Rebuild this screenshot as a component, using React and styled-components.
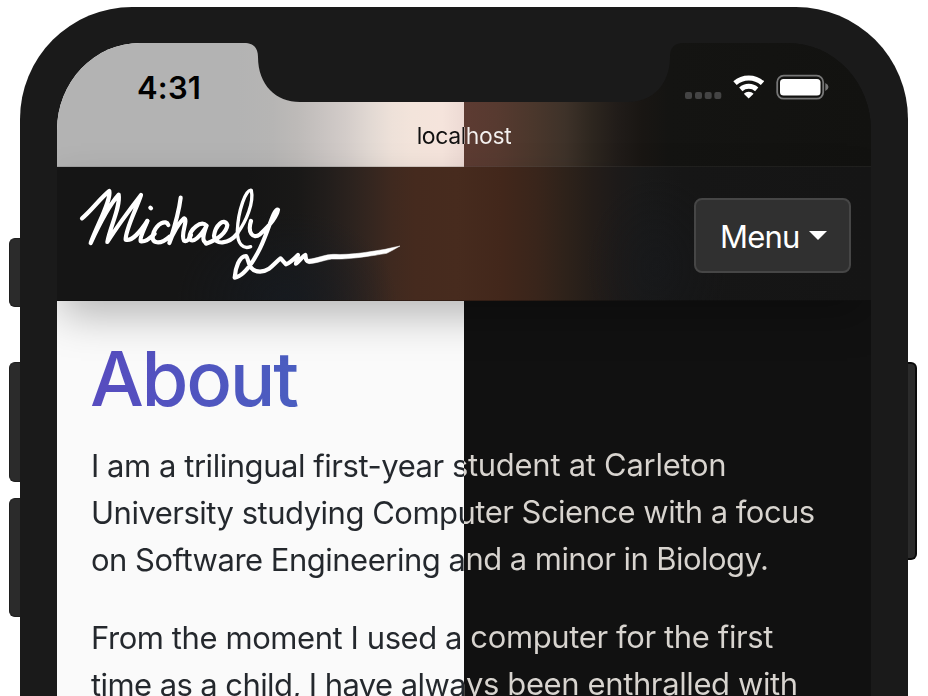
import React from 'react';
import styled, { createGlobalStyle } from 'styled-components';

const Global = createGlobalStyle`
  * { box-sizing: border-box; }
  body { margin: 0; background: #fff; overflow: hidden; font-family: Inter, "Liberation Sans", sans-serif; }
`;

const Stage = styled.div`
  display: grid;
  grid-template-columns: 20px 888px 20px;
  width: 928px;
  height: 696px;
  overflow: hidden;
`;

const ButtonRail = styled.div`
  display: flex;
  flex-direction: column;
  align-items: ${p => (p.$side === 'left' ? 'flex-end' : 'flex-start')};
  padding-top: ${p => p.$top}px;
`;

const SideButton = styled.div`
  flex: none;
  width: ${p => (p.$side === 'left' ? 11 : 9)}px;
  height: ${p => p.$height}px;
  margin-bottom: ${p => p.$gap || 0}px;
  background: #2b2b2b;
  border: ${p => (p.$side === 'left' ? '1px solid #1f1f1f' : '2px solid #0b0b0b')};
  border-${p => (p.$side === 'left' ? 'right' : 'left')}: 0;
  border-radius: ${p => (p.$side === 'left' ? '6px 0 0 6px' : '0 6px 6px 0')};
`;

const Bezel = styled.div`
  height: 800px;
  margin-top: 7px;
  padding: 36px 37px 0;
  background: #1a1a1a;
  border-radius: 112px 112px 0 0;
`;

const Screen = styled.div`
  position: relative;
  width: 814px;
  height: 764px;
  overflow: hidden;
  border-radius: 83px 83px 0 0 / 87px 87px 0 0;
  background: linear-gradient(90deg, #fafafa 407px, #111 407px);
`;

const Notch = styled.svg`
  position: absolute;
  top: 0;
  left: 187px;
  width: 440px;
  height: 60px;
`;

const SafariTop = styled.div`
  display: flex;
  flex-direction: column;
  height: 124px;
  background: linear-gradient(90deg,
    #b3b3b3 0, #b3b3b3 180px, #b6b5b4 215px, #bdbab8 240px, #c7c2c0 263px, #d3ccc9 289px,
    #e2d9d3 314px, #eee1d9 335px, #f3e4db 355px, #f5e4dc 385px, #eddad4 407px,
    #5d3b32 407px, #573a30 440px, #4b372c 475px, #3e3229 508px, #2d261f 535px,
    #211c19 560px, #191613 585px, #141412 612px, #121210 100%);
  border-bottom: 1px solid rgba(90, 90, 90, .2);
`;

const StatusBar = styled.div`
  display: flex;
  justify-content: space-between;
  align-items: center;
  height: 59px;
  padding: 29px 42px 0 80px;
`;

const Clock = styled.span`
  font-size: 31px;
  line-height: 31px;
  font-weight: 600;
  letter-spacing: .2px;
  color: #000;
`;

const StatusIcons = styled.svg`
  width: 146px;
  height: 28px;
`;

const Address = styled.div`
  display: flex;
  justify-content: center;
  padding-top: 20px;
  font-size: 23px;
  line-height: 28px;
`;

const AddressText = styled.span`
  letter-spacing: -.4px;
  color: transparent;
  background: linear-gradient(90deg, #111 47px, #f4f1ef 47px);
  background-clip: text;
  -webkit-background-clip: text;
`;

const Navbar = styled.nav`
  position: relative;
  display: flex;
  justify-content: space-between;
  align-items: flex-start;
  height: 134px;
  padding: 19px 20px 0 21px;
  border-bottom: 1px solid rgba(0, 0, 0, .25);
  background:
    radial-gradient(ellipse 110px 90px at 230px 134px, rgba(22, 27, 34, .75), rgba(22, 27, 34, 0)),
    radial-gradient(ellipse 70px 90px at 600px 100px, rgba(22, 25, 30, .4), rgba(22, 25, 30, 0)),
    linear-gradient(90deg,
      #151515 0, #151515 190px, #191817 240px, #211d1b 268px, #2b221e 293px, #35261f 315px,
      #3f291f 335px, #452a1e 358px, #472b1e 400px, #42271b 445px, #39251b 480px, #2e221a 508px,
      #241d19 535px, #1d1a19 560px, #191919 585px, #161616 625px, #151515 100%);
  box-shadow: 0 18px 40px -4px rgba(0, 0, 0, .28);
`;

const Signature = styled.svg`
  width: 325px;
  height: 95px;
`;

const MenuButton = styled.button`
  display: flex;
  align-items: center;
  gap: 9px;
  width: 157px;
  height: 75px;
  margin-top: 12px;
  padding: 3px 0 0 24px;
  border: 2px solid #464646;
  border-radius: 8px;
  background: #303030;
  color: #fff;
  font: 400 31px/36px Inter, sans-serif;
  letter-spacing: -.8px;
`;

const Caret = styled.span`
  margin-bottom: 3px;
  border: 9px solid transparent;
  border-top-color: #fff;
  border-bottom: 0;
`;

const Article = styled.main`
  padding: 32px 0 0 34px;
`;

const Heading = styled.h1`
  width: 640px;
  margin: 0 0 18px;
  font-size: 76px;
  line-height: 91px;
  font-weight: 500;
  letter-spacing: -2.3px;
  text-indent: -1px;
  color: transparent;
  background: linear-gradient(90deg, #574cbf 0, #4a5ec0 210px, #3b72c2 100%);
  background-clip: text;
  -webkit-background-clip: text;
`;

const Paragraph = styled.p`
  margin: 0 0 31px;
  font-size: 31px;
  line-height: 47px;
  white-space: nowrap;
  color: transparent;
  background: linear-gradient(90deg, #24282d 373px, #d8d4cf 373px);
  background-clip: text;
  -webkit-background-clip: text;
`;

const Line = styled.span`
  display: block;
`;

const Run = styled.span`
  letter-spacing: ${p => p.$tracking}px;
  line-height: 0;
  vertical-align: ${p => (p.$raised ? '1px' : 'baseline')};
`;

const paragraphs = [
  [
    [['I am a trilingual first-year s', -.46], ['tudent at Carleton', -.28]],
    [['University studying Compu', -.5], ['ter Science with a focus', -.53]],
    [['on Software Engineering a', -.5], ['nd a minor in Biology.', -.55]],
  ],
  [
    [['From the moment I used a', -.43], [' computer for the first', -.38]],
    [['time as a child, I have alwa', -.59], ['ys been enthralled with', -.39]],
  ],
];

export default function App() {
  return (
    <>
      <Global />
      <Stage>
        <ButtonRail $side="left" $top={238}>
          <SideButton $side="left" $height={69} $gap={55} />
          <SideButton $side="left" $height={120} $gap={16} />
          <SideButton $side="left" $height={119} />
        </ButtonRail>
        <Bezel>
          <Screen>
            <SafariTop>
              <StatusBar>
                <Clock>4:31</Clock>
                <StatusIcons viewBox="0 0 146 28">
                  <g fill="#444">
                    <rect x="2" y="19" width="7" height="7" rx="2" />
                    <rect x="12" y="19" width="7" height="7" rx="2" />
                    <rect x="21.7" y="19" width="7" height="7" rx="2" />
                    <rect x="31.3" y="19" width="7" height="7" rx="2" />
                  </g>
                  <g fill="none" stroke="#fff" strokeWidth="5">
                    <path d="M52 10.2 A20.5 20.5 0 0 1 79.5 10.2" />
                    <path d="M57.8 16.3 A12.2 12.2 0 0 1 73.7 16.3" />
                  </g>
                  <path d="M65.7 25.6 L60.8 20.8 A7 7 0 0 1 70.6 20.8 Z" fill="#fff" />
                  <rect x="94.2" y="2.7" width="46" height="23" rx="6.5" fill="none" stroke="#777" strokeWidth="1.8" />
                  <rect x="97" y="6" width="40.5" height="16.5" rx="3.5" fill="#fff" />
                  <path d="M142.3 10 Q145.5 11.5 145.5 14 Q145.5 16.5 142.3 18 Z" fill="#777" />
                </StatusIcons>
              </StatusBar>
              <Address>
                <AddressText>localhost</AddressText>
              </Address>
            </SafariTop>
            <Navbar>
              <Signature viewBox="54 45 975 285" fill="none" stroke="#fff" strokeWidth="12.5" strokeLinecap="round" strokeLinejoin="round">
                <path d="M66 142 C95 118 122 80 148 60 C154 88 112 160 92 216 C118 160 148 102 176 71 C182 108 150 168 142 213 C168 172 212 112 243 72 C230 112 196 176 197 206 C214 212 240 184 262 150" />
                <path d="M262 150 C254 172 238 200 242 211 C256 214 270 202 284 188" />
                <path d="M271 110 L273 112" />
                <path d="M325 162 C318 144 292 158 281 184 C268 216 296 226 330 196" />
                <path d="M362 80 C356 130 340 178 328 216 C338 186 358 154 372 142 C386 146 360 190 372 209 C380 213 388 205 393 192" />
                <path d="M440 164 C422 146 390 176 388 200 C396 224 424 192 439 166 C430 190 424 212 440 216" />
                <path d="M438 218 C474 206 500 184 502 162 C492 138 466 164 462 194 C464 224 506 220 532 188" />
                <path d="M532 188 C560 148 582 94 574 58 C558 52 534 120 532 180 C532 220 550 236 572 227" strokeWidth="10" />
                <path d="M573 150 C562 184 578 206 600 190 C624 168 650 140 654 116 C640 112 626 180 600 232 C574 284 546 316 524 320 C526 290 538 256 558 255 C568 262 560 300 600 302 C632 300 644 274 662 262 L678 280 C690 276 700 266 714 252 L708 278 C718 270 726 258 736 252 C738 262 736 270 746 272" />
                <path d="M744 265 C775 262 790 251 820 250 C880 253 940 240 975 235 Q1000 229 1020 225 Q998 238 980 247 C930 255 870 266 815 264 C790 268 770 277 748 278 Z" fill="#fff" strokeWidth="1.5" />
              </Signature>
              <MenuButton>
                Menu
                <Caret />
              </MenuButton>
            </Navbar>
            <Article>
              <Heading>About</Heading>
              {paragraphs.map((lines, i) => (
                <Paragraph key={i}>
                  {lines.map(([left, right]) => (
                    <Line key={left[0]}>
                      <Run $tracking={left[1]}>{left[0]}</Run>
                      <Run $tracking={right[1]} $raised>{right[0]}</Run>
                    </Line>
                  ))}
                </Paragraph>
              ))}
            </Article>
            <Notch viewBox="0 0 440 60">
              <path d="M0 0 C9 0 14 4 14 14 C14 42 32 59 56 59 H384 C408 59 426 42 426 14 C426 4 431 0 440 0 Z" fill="#1a1a1a" />
            </Notch>
          </Screen>
        </Bezel>
        <ButtonRail $side="right" $top={362}>
          <SideButton $side="right" $height={198} />
        </ButtonRail>
      </Stage>
    </>
  );
}
